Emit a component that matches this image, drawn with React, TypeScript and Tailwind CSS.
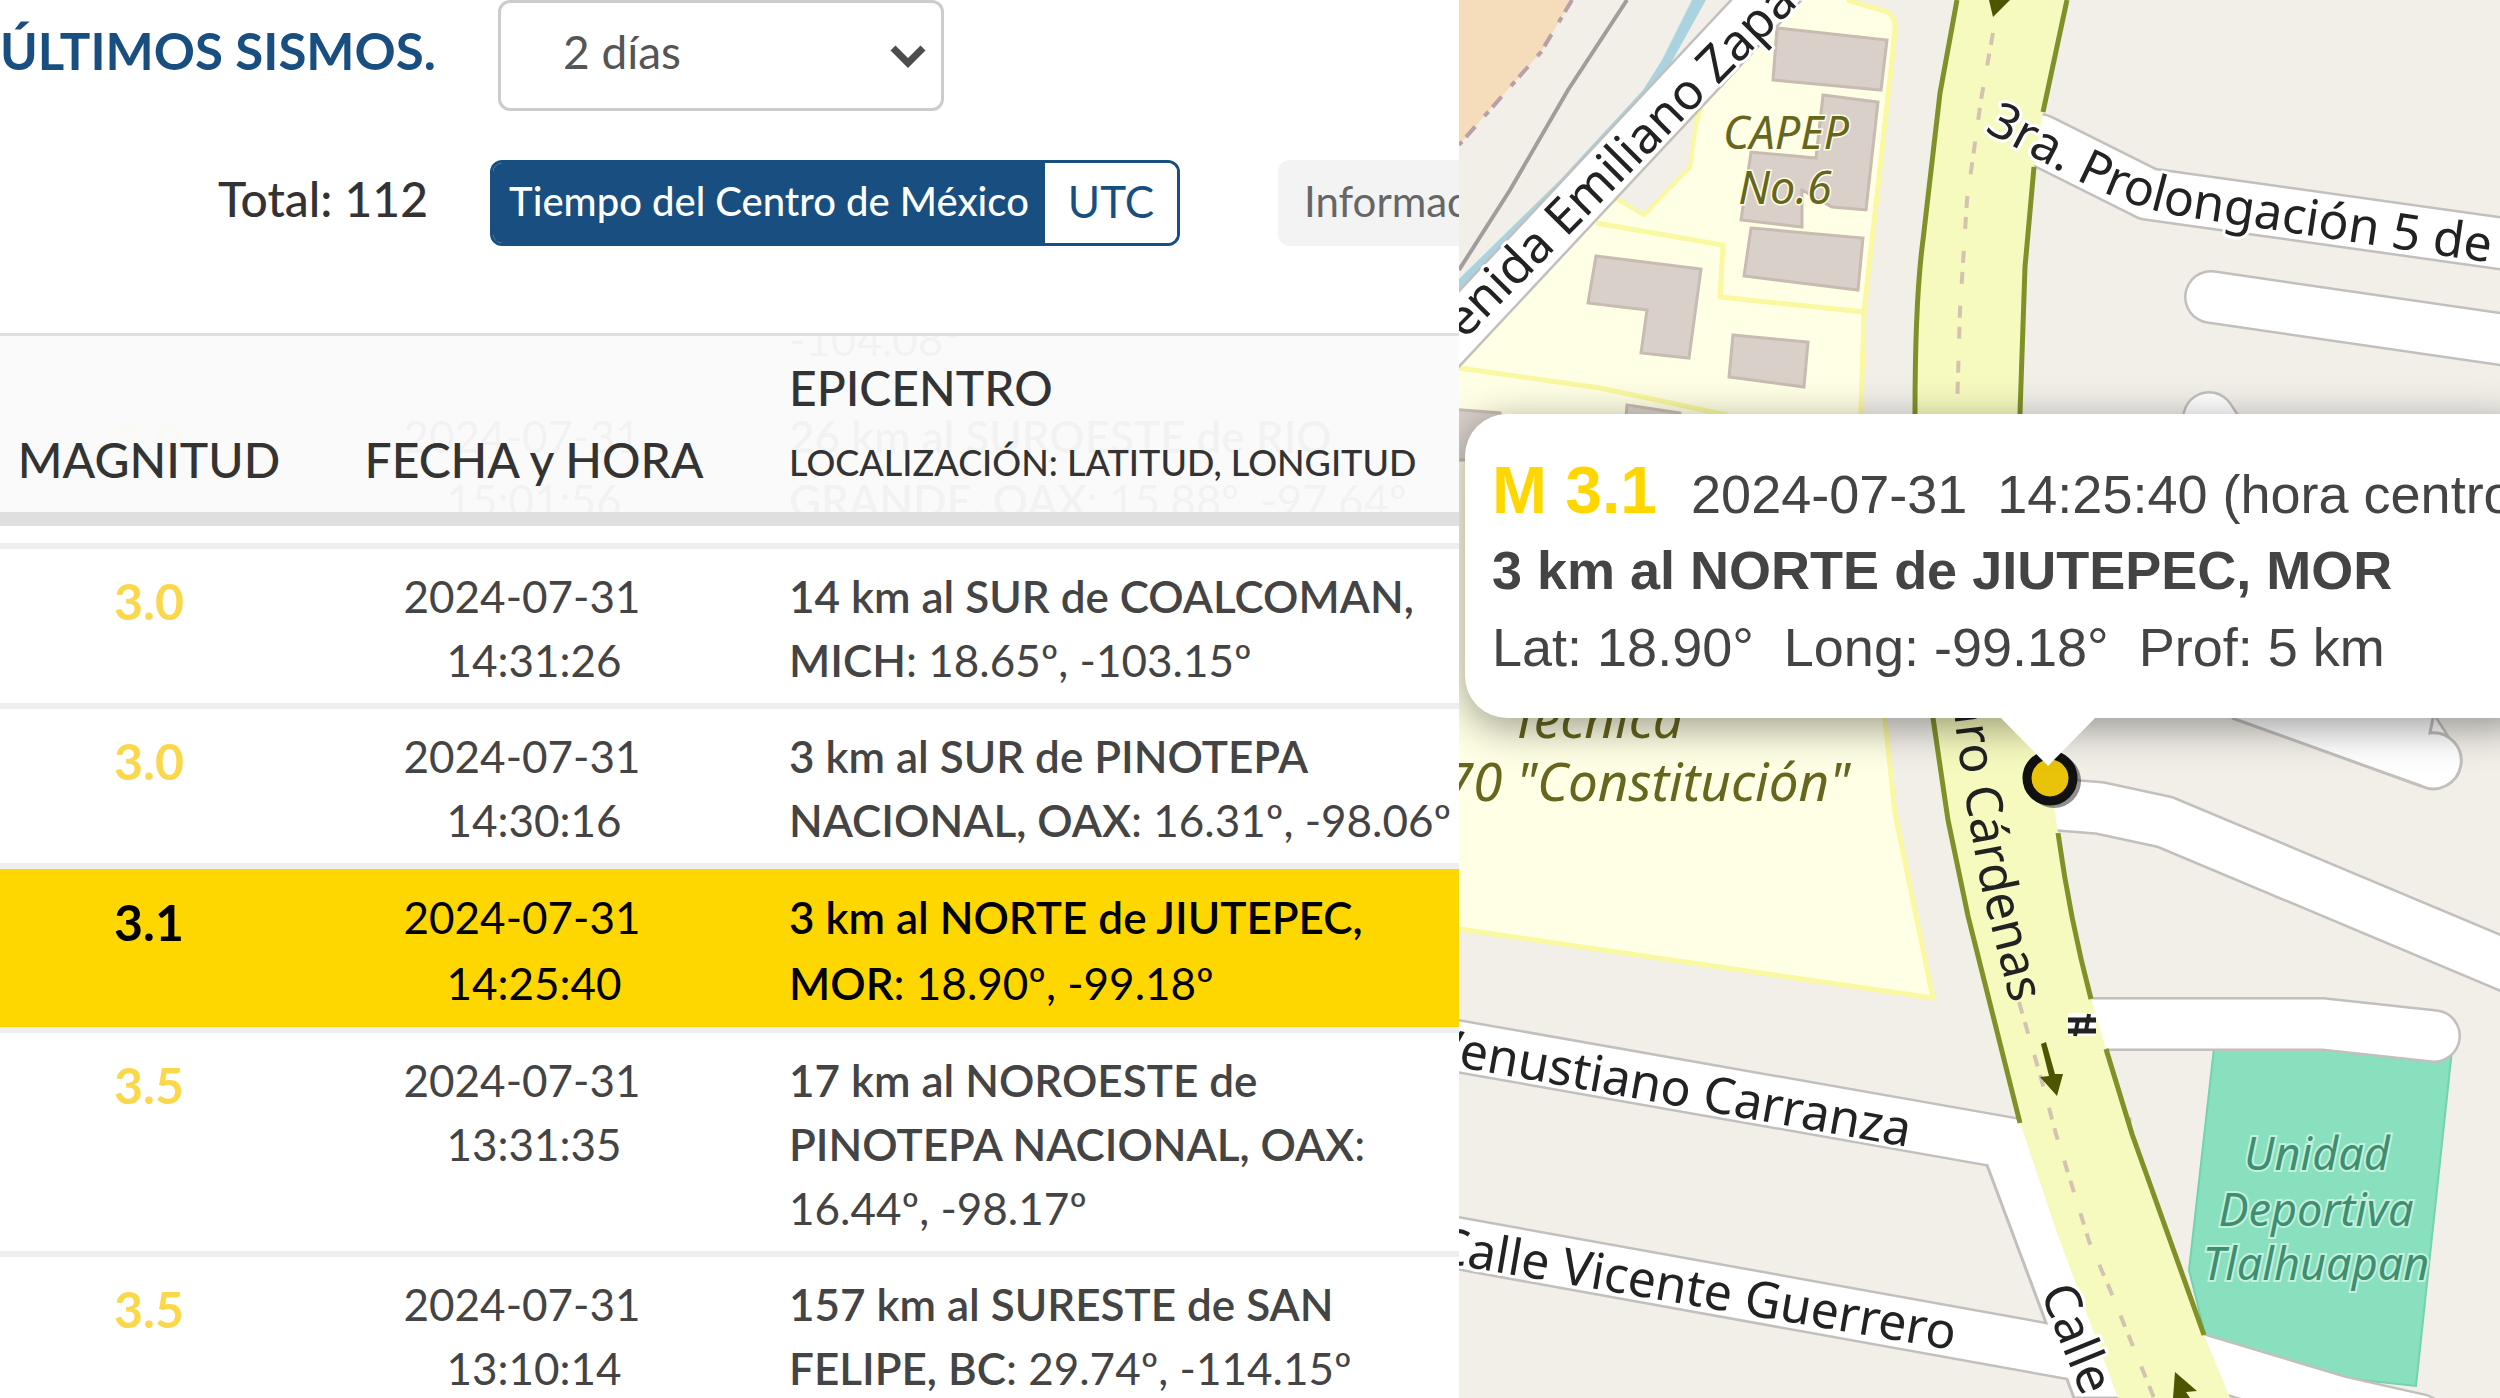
import { useState } from "react";

type Quake = {
  mag: string;
  date: string;
  time: string;
  place: string;
  coords: string;
};

const quakes: Quake[] = [
  { mag: "3.9", date: "2024-07-31", time: "15:01:56", place: "26 km al SUROESTE de RIO GRANDE, OAX", coords: "15.88º, -97.64º" },
  { mag: "3.0", date: "2024-07-31", time: "14:31:26", place: "14 km al SUR de COALCOMAN, MICH", coords: "18.65º, -103.15º" },
  { mag: "3.0", date: "2024-07-31", time: "14:30:16", place: "3 km al SUR de PINOTEPA NACIONAL, OAX", coords: "16.31º, -98.06º" },
  { mag: "3.1", date: "2024-07-31", time: "14:25:40", place: "3 km al NORTE de JIUTEPEC, MOR", coords: "18.90º, -99.18º" },
  { mag: "3.5", date: "2024-07-31", time: "13:31:35", place: "17 km al NOROESTE de PINOTEPA NACIONAL, OAX", coords: "16.44º, -98.17º" },
  { mag: "3.5", date: "2024-07-31", time: "13:10:14", place: "157 km al SURESTE de SAN FELIPE, BC", coords: "29.74º, -114.15º" },
];

function Columns() {
  return (
    <colgroup>
      <col className="w-[298px]" />
      <col className="w-[472px]" />
      <col />
    </colgroup>
  );
}

function Controls() {
  const [range, setRange] = useState("2");
  const [utc, setUtc] = useState(false);
  const on = "bg-[#184f80] text-white";
  const off = "bg-white text-[#184f80]";

  return (
    <div className="h-[333px] shrink-0">
      <div className="flex h-[111px] items-center">
        <label htmlFor="range" className="w-[498px] shrink-0 pb-2 text-[51px] font-bold text-[#184f80]">
          ÚLTIMOS SISMOS.
        </label>
        <div className="relative h-full w-[446px]">
          <select
            id="range"
            value={range}
            onChange={(e) => setRange(e.target.value)}
            className="h-full w-full appearance-none rounded-xl border-[3px] border-[#ccc] bg-white pb-2 pl-[62px] text-[46px] text-[#555]"
          >
            <option value="1">1 día</option>
            <option value="2">2 días</option>
            <option value="7">7 días</option>
          </select>
          <svg viewBox="0 0 36 26" className="pointer-events-none absolute top-[44px] right-[18px] h-[26px] w-[36px]">
            <path d="M3 4 L18 19 L33 4" fill="none" stroke="#4d4d4d" strokeWidth="7" />
          </svg>
        </div>
      </div>
      <div className="mt-[49px] flex h-[86px] items-center overflow-hidden">
        <p className="w-[428px] shrink-0 pb-2 text-right text-[48px] font-medium text-[#333]">Total: 112</p>
        <div className="ml-[62px] flex h-full shrink-0 overflow-hidden rounded-xl border-[3px] border-[#184f80]">
          <button
            type="button"
            onClick={() => setUtc(false)}
            className={`w-[552px] pb-1 text-[40px] font-medium whitespace-nowrap ${utc ? off : on}`}
          >
            Tiempo del Centro de México
          </button>
          <button type="button" onClick={() => setUtc(true)} className={`w-[132px] pb-1 text-[44px] ${utc ? on : off}`}>
            UTC
          </button>
        </div>
        <button type="button" className="ml-[98px] h-full shrink-0 rounded-xl bg-[#f3f3f3] px-[26px] pb-1 text-[42px] text-[#666]">
          Información
        </button>
      </div>
    </div>
  );
}

function QuakeList() {
  const [active, setActive] = useState(3);

  return (
    <div className="min-h-0 flex-1 overflow-hidden text-[#444]">
      {/* header floats translucent over the scrolled rows */}
      <div className="relative z-10 h-[193px] border-t-[3px] border-b-[14px] border-[#dfdfdf] bg-[#fafafa]/96">
        <table className="w-full table-fixed text-[#333]">
          <Columns />
          <thead>
            <tr className="h-[153px] align-bottom text-[48px] leading-[58px]">
              <th className="font-medium">MAGNITUD</th>
              <th className="font-medium">FECHA y HORA</th>
              <th className="pl-[19px] text-left font-medium">
                <span className="block pb-2 leading-[78px]">EPICENTRO</span>
                <span className="block text-[36px] leading-[54px] whitespace-nowrap">LOCALIZACIÓN: LATITUD, LONGITUD</span>
              </th>
            </tr>
          </thead>
        </table>
      </div>
      <table className="-mt-[193px] w-full table-fixed text-[44px]">
        <Columns />
        <tbody>
          <tr className="h-[53px] align-bottom leading-[64px]">
            <td />
            <td />
            <td className="pl-[19px]">
              <span className="-mt-8 block pb-3">-104.08º</span>
            </td>
          </tr>
          {quakes.map((q, i) => (
            <tr
              key={q.time}
              onClick={() => setActive(i)}
              className={`cursor-pointer border-t-[6px] border-[#eee] align-top ${
                i === active ? "bg-[#ffd700] leading-[66px] text-black" : "leading-[64px]"
              }`}
            >
              <td className={`pt-5 text-center text-[50px] font-bold ${i === active ? "text-black" : "text-[#fbd84b]"}`}>
                {q.mag}
              </td>
              <td className="pt-[15px] pb-[11px] text-center">
                <span className="block pr-6">{q.date}</span>
                <span className="block">{q.time}</span>
              </td>
              <td className="pt-[15px] pb-[11px] pl-[19px]">
                <span className="font-semibold">{q.place}</span>: <span className="whitespace-nowrap">{q.coords}</span>
              </td>
            </tr>
          ))}
        </tbody>
      </table>
    </div>
  );
}

const roads = [
  "M2040 140 L2148 194 L2520 246",
  "M2211 297 L2520 342",
  "M2209 418 L2433 760",
  "M2050 804 L2100 808 L2165 822 L2520 971",
  "M2090 1024 H2323 L2434 1036",
  "M1440 1043 L2020 1145",
  "M1440 1240 L2090 1357",
  "M2180 1354 L2340 1402 L2420 1420",
];

function StreetMap() {
  return (
    <svg
      viewBox="1459 0 1041 1398"
      preserveAspectRatio="xMinYMin slice"
      className="block h-full w-full bg-[#f2efe9] font-['Noto_Sans',sans-serif]"
      role="img"
      aria-label="Mapa del epicentro"
    >
      <path d="M1459 0 H1572 L1541 52 L1503 95 L1459 145 Z" fill="#f5dcba" />
      <path d="M1572 0 L1541 52 L1503 95 L1459 145" fill="none" stroke="#b9a0a8" strokeWidth="4" strokeDasharray="14 6 6 14" />
      <path d="M1627 0 L1568 90 L1510 190 L1459 270" fill="none" stroke="#a09d9b" strokeWidth="4" />
      <path d="M1692 0 H1706 L1671 63 L1647 96 L1563 186 L1459 290 V279 L1560 180 L1643 90 L1662 60 Z" fill="#aad3df" />

      {/* school grounds */}
      <path
        d="M1802 0 H1847 L1888 12 Q1896 18 1895 30 L1892 60 L1878 187 L1864 312 L1861 413 L1885 720 L1895 813 L1933 998 L1459 929 V365 Z"
        fill="#ffffe5"
      />
      <g fill="none" stroke="#faf8a0" strokeWidth="5">
        <path d="M1847 0 L1888 12 Q1896 18 1895 30 L1892 60 L1878 187 L1864 312 L1861 413 L1885 720 L1895 813 L1933 998 L1459 929" />
        <path d="M1596 223 L1723 245 L1720 297 L1864 312" />
        <path d="M1459 368 L1600 388 L1727 415" />
      </g>
      <path d="M1700 110 L1696 125 L1690 167 L1644 215 L1610 195 Z" fill="#f2efe9" stroke="#faf8a0" strokeWidth="4" />

      <g fill="#d9d0c9" stroke="#c8bbb2" strokeWidth="3">
        <path d="M1777 28 L1887 40 L1881 90 L1773 80 Z" />
        <path d="M1823 95 L1878 102 L1866 210 L1832 207 L1802 190 L1802 227 L1741 220 L1751 152 L1816 158 Z" />
        <path d="M1751 228 L1863 238 L1858 290 L1744 276 Z" />
        <path d="M1596 256 L1701 269 L1689 358 L1641 353 L1647 310 L1588 303 Z" />
        <path d="M1733 335 L1808 342 L1804 387 L1729 377 Z" />
        <path d="M1450 409 L1500 413 V460 H1450 Z" />
        <path d="M1627 405 L1680 413 V430 H1625 Z" />
      </g>

      <path d="M2214 1048 L2452 1050 L2416 1386 L2332 1377 L2206 1338 L2189 1270 Z" fill="#88e0be" stroke="#74d2ad" strokeWidth="2" />

      {/* minor streets: grey casing first, white fill on top */}
      <g fill="none" stroke="#c2bfbd" strokeWidth="54" strokeLinecap="round" strokeLinejoin="round">
        {roads.map((d) => (
          <path key={d} d={d} />
        ))}
        <path d="M1800 -36 L1430 360" />
      </g>
      <path d="M1987 1165 L2036 1296 L2074 1398 H2130 V1119 H2020 Z" fill="#fff" stroke="#c2bfbd" strokeWidth="3" />
      <g fill="none" stroke="#fff" strokeWidth="49" strokeLinecap="round" strokeLinejoin="round">
        {roads.map((d) => (
          <path key={d} d={d} />
        ))}
        <path d="M1800 -36 L1430 360" />
      </g>
      <path d="M2232 718 L2421 786 A28 28 0 1 0 2430 733 L2433 718" fill="#fff" stroke="#c2bfbd" strokeWidth="3" />

      {/* main avenue */}
      <path
        d="M1957 0 L1940 93 L1923 240 Q1915 300 1915 413 Q1915 600 1933 718 L1948 820 L1968 916 L2020 1123 L2056 1230 L2118 1398 H2230 L2204 1335 L2132 1134 L2106 1049 L2091 999 L2058 833 L2040 718 Q2020 560 2020 413 L2025 267 L2034 167 L2043 112 L2067 0 Z"
        fill="#f7fabf"
      />
      <g fill="none" stroke="#80912a" strokeWidth="5">
        <path d="M1957 0 L1940 93 L1923 240 Q1915 300 1915 413 Q1915 600 1933 718 L1948 820 L1968 916 L2020 1123" />
        <path d="M2067 0 L2043 112" />
        <path d="M2034 167 L2025 267 L2020 413 Q2020 600 2043 765" />
        <path d="M2058 833 Q2070 920 2091 999" />
        <path d="M2106 1049 L2132 1134 L2204 1335" />
      </g>
      <g fill="none" stroke="#d3c3b0" strokeWidth="4" strokeDasharray="12 9 12 22">
        <path d="M1993 33 L1981 100 L1967 200 L1960 310 L1957 410" />
        <path d="M2019 1002 L2041 1078 L2056 1134 L2089 1241 L2111 1292 L2154 1398" />
      </g>
      <g fill="#4d5500">
        <path d="M1989 0 H2010 L1993 17 Z" />
        <path d="M2041 1044 L2046 1042 L2055 1074 L2063 1074 L2057 1096 L2040 1077 L2049 1076 Z" />
        <path d="M2175 1372 L2197 1391 L2186 1392 L2190 1398 H2173 Z" />
      </g>
      <path d="M2068 1013 H2096 V1036 H2068 Z" fill="#fff" />
      <path d="M2068 1020 H2096 M2068 1031 H2096" stroke="#222" strokeWidth="5" />
      <path d="M2089 1014 L2086 1031 M2078 1020 L2075 1036" stroke="#222" strokeWidth="4" />

      <g fontSize="50" fill="#222" stroke="#fff" strokeWidth="6" strokeLinejoin="round" paintOrder="stroke">
        <text transform="translate(1424 381) rotate(-45.2)">Avenida Emiliano Zapata</text>
        <path id="prolongacion" d="M1984 131 L2079 181 Q2130 207 2180 216 L2560 273" fill="none" stroke="none" />
        <text>
          <textPath href="#prolongacion">3ra. Prolongación 5 de</textPath>
        </text>
        <text transform="translate(1908 1147) rotate(10.1)" textAnchor="end">Venustiano Carranza</text>
        <text transform="translate(1953 1350) rotate(9.7)" textAnchor="end">Calle Vicente Guerrero</text>
        <text transform="translate(2040 1292) rotate(68)">Calle</text>
      </g>
      <path id="cardenas" d="M1935 560 L1955 720 Q1964 800 1982 890 L2011 1004" fill="none" />
      <text fontSize="50" fill="#222" stroke="#f7fabf" strokeWidth="4" paintOrder="stroke" textAnchor="end">
        <textPath href="#cardenas" startOffset="100%">Lázaro Cárdenas</textPath>
      </text>

      <g fontStyle="italic" fill="#66661f" stroke="#ffffe5" strokeWidth="3" paintOrder="stroke">
        <g fontSize="45" textAnchor="middle">
          <text x="1786" y="149">CAPEP</text>
          <text x="1785" y="204">No.6</text>
        </g>
        <g fontSize="53">
          <text x="1511" y="738">Técnica</text>
          <text x="1850" y="801" textAnchor="end">70 "Constitución"</text>
        </g>
      </g>
      <g fontSize="45" fontStyle="italic" textAnchor="middle" fill="#3d8f70" stroke="#c4f0df" strokeWidth="4" paintOrder="stroke">
        <text x="2317" y="1170">Unidad</text>
        <text x="2316" y="1226">Deportiva</text>
        <text x="2316" y="1280">Tlalhuapan</text>
      </g>

      <circle cx="2054" cy="781" r="27" fill="#222" opacity="0.5" />
      <circle cx="2050" cy="778" r="23" fill="#e8c30a" stroke="#111" strokeWidth="9" />
    </svg>
  );
}

function Popup() {
  return (
    <div className="absolute top-[414px] -right-10 left-[6px] font-['Liberation_Sans',Arial,sans-serif] text-[#444]">
      <div className="rounded-[42px] bg-white pt-[38px] pb-[32px] pl-[27px] text-[54px] leading-[77px] whitespace-nowrap shadow-[0_9px_42px_rgba(0,0,0,0.4)]">
        <p className="h-20">
          <b className="mr-[34px] text-[66px] text-[#ffd700]">M 3.1</b>
          2024-07-31 &nbsp;14:25:40 (hora centro)
        </p>
        <p className="font-bold">3 km al NORTE de JIUTEPEC, MOR</p>
        <p>Lat: 18.90° &nbsp;Long: -99.18° &nbsp;Prof: 5 km</p>
      </div>
      <svg viewBox="0 0 94 48" className="absolute top-full left-[536px] h-[48px] w-[94px]">
        <path d="M0 0 H94 L47 48 Z" fill="#fff" />
      </svg>
    </div>
  );
}

export default function App() {
  return (
    <div className="grid h-screen grid-cols-[1459fr_1041fr] overflow-hidden bg-white font-[Lato,sans-serif]">
      <section className="flex min-h-0 min-w-0 flex-col overflow-hidden">
        <Controls />
        <QuakeList />
      </section>
      <section className="relative min-h-0 min-w-0 overflow-hidden">
        <StreetMap />
        <Popup />
      </section>
    </div>
  );
}
